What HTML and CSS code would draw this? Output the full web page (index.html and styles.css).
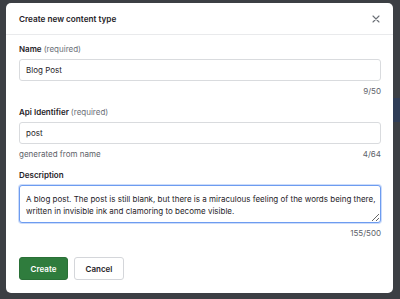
FILE: index.html
```html
<!DOCTYPE html>
<html lang="en">
<head>
  <meta charset="UTF-8" />
  <meta name="viewport" content="width=device-width, initial-scale=1.0" />
  <title>Create new content type</title>
  <link rel="stylesheet" href="styles.css">
</head>
<body>
  <div class="backdrop">
    <div class="bg-strip"></div>
  </div>
  <div class="modal">
    <div class="modal-header">
      <h2>Create new content type</h2>
      <button class="close" aria-label="Close">
        <svg width="8" height="8" viewBox="0 0 8 8"><path d="M1 1L7 7M7 1L1 7" stroke="#6b6f76" stroke-width="1.1" stroke-linecap="round" /></svg>
      </button>
    </div>
    <form class="modal-body">
      <div class="field">
        <label class="label">Name <span class="muted">(required)</span></label>
        <input class="input" type="text" value="Blog Post" />
        <div class="hint"><span></span><span>9/50</span></div>
      </div>
      <div class="field">
        <label class="label">Api Identifier <span class="muted">(required)</span></label>
        <input class="input" type="text" value="post" />
        <div class="hint"><span>generated from name</span><span>4/64</span></div>
      </div>
      <div class="field">
        <label class="label">Description</label>
        <textarea class="textarea">A blog post. The post is still blank, but there is a miraculous feeling of the words being there, written in invisible ink and clamoring to become visible.</textarea>
        <div class="hint"><span></span><span>155/500</span></div>
      </div>
      <div class="actions">
        <button type="button" class="btn btn-primary">Create</button>
        <button type="button" class="btn btn-secondary">Cancel</button>
      </div>
    </form>
  </div>
</body>
</html>
```

FILE: styles.css
```css
* { margin: 0; padding: 0; box-sizing: border-box; }
body {
  font-family: Inter, 'Noto Sans', sans-serif;
  background: #3c3f44;
  color: #1f2328;
  height: 299px;
  overflow: hidden;
  position: relative;
}
.backdrop {
  position: absolute;
  inset: 0;
}
.bg-strip {
  position: absolute;
  top: 98px;
  right: 0;
  width: 8px;
  height: 24px;
  background: #2f3d57;
}
.modal {
  position: relative;
  margin: 3px 0 0 6px;
  width: 387px;
  height: 290px;
  background: #fff;
  border-radius: 5px;
}
.modal-header {
  display: flex;
  justify-content: space-between;
  align-items: center;
  height: 32px;
  padding: 0 10px 0 13px;
  border-bottom: 1px solid #e9eaec;
}
.modal-header h2 {
  font-size: 8.2px;
  font-weight: 600;
  color: #1f2328;
}
.close {
  border: none;
  background: none;
  width: 14px;
  height: 14px;
  display: flex;
  align-items: center;
  justify-content: center;
}
.modal-body {
  padding: 9px 12px 0 13px;
}
.field { margin-bottom: 10px; }
.label {
  display: block;
  font-size: 8px;
  line-height: 11px;
  font-weight: 600;
  margin-bottom: 4px;
}
.muted {
  font-weight: 400;
  color: #6b7077;
}
.input, .textarea {
  display: block;
  width: 100%;
  font-family: inherit;
  font-size: 8px;
  color: #1f2328;
  border: 1px solid #d9dbde;
  border-radius: 3px;
  background: #fff;
}
.input {
  height: 22px;
  padding: 0 6px;
}
.textarea {
  height: 38px;
  padding: 7px 4px 3px 6px;
  line-height: 12px;
  resize: vertical;
  border-color: #6d9cf0;
  box-shadow: 0 0 0 1px rgba(109, 156, 240, 0.35);
  outline: none;
}
.hint {
  display: flex;
  justify-content: space-between;
  font-size: 8px;
  line-height: 11px;
  color: #5d6168;
  margin-top: 5px;
}
.actions {
  display: flex;
  gap: 6px;
  margin-top: 18px;
}
.btn {
  height: 23px;
  font-family: inherit;
  font-size: 8px;
  font-weight: 600;
  border-radius: 3px;
  cursor: pointer;
}
.btn-primary {
  width: 49px;
  background: #2f7c3d;
  color: #fff;
  border: 1px solid #2a7037;
}
.btn-secondary {
  width: 50px;
  background: #fff;
  color: #1f2328;
  border: 1px solid #d4d6da;
}
```
